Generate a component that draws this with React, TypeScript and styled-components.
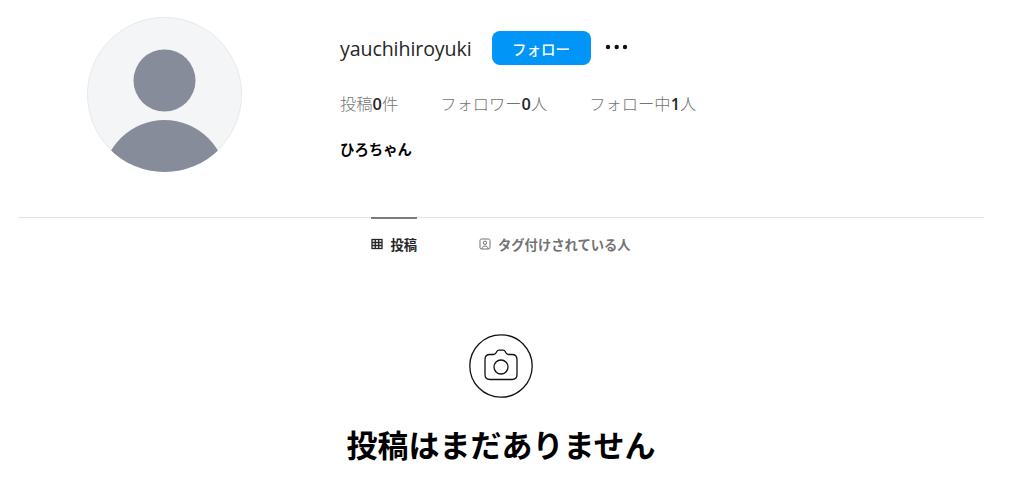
import React from "react";
import styled, { createGlobalStyle } from "styled-components";

const Global = createGlobalStyle`
  html, body { margin: 0; padding: 0; background: #fff; }
  body { font-family: "Open Sans", "Noto Sans CJK JP", sans-serif; color: #000; overflow: hidden; }
`;

const Page = styled.main`
  width: 966px;
  height: 504px;
  margin-left: 18px;
  overflow: hidden;
`;

const Header = styled.header`
  display: flex;
  height: 218px;
  padding-top: 17px;
  box-sizing: border-box;
  border-bottom: 1px solid #e3e3e3;
`;

const AvatarColumn = styled.div`
  width: 322px;
  padding-left: 69px;
  box-sizing: border-box;
  flex: none;
`;

const Avatar = styled.svg`
  display: block;
  width: 155px;
  height: 155px;
`;

const Info = styled.section`
  display: flex;
  flex-direction: column;
  padding-top: 14px;
`;

const TopRow = styled.div`
  display: flex;
  align-items: center;
  height: 34px;
`;

const Username = styled.h2`
  margin: 0 20px 0 0;
  font-size: 19.6px;
  font-weight: 400;
  color: #262626;
  letter-spacing: -0.1px;
`;

const FollowButton = styled.button`
  width: 99px;
  height: 34px;
  border: 0;
  border-radius: 8px;
  padding: 0;
  background: #0095f6;
  color: #fff;
  font-family: "Noto Sans CJK JP", sans-serif;
  font-size: 14.5px;
  font-weight: 500;
`;

const MoreDots = styled.svg`
  margin-left: 13px;
  width: 24px;
  height: 24px;
  margin-top: -2px;
`;

const Stats = styled.ul`
  display: flex;
  gap: 42px;
  margin: 27px 0 0;
  padding: 0;
  list-style: none;
  font-family: "Noto Sans CJK JP", sans-serif;
  font-size: 16.3px;
  line-height: 22px;
  font-weight: 300;
  color: #737373;
`;

const Count = styled.b`
  font-family: "Open Sans", sans-serif;
  font-weight: 600;
  color: #262626;
`;

const Bio = styled.h1`
  margin: 24px 0 0;
  font-family: "Noto Sans CJK JP", sans-serif;
  font-size: 14.4px;
  line-height: 20px;
  font-weight: 700;
`;

const Tabs = styled.nav`
  display: flex;
  justify-content: center;
  gap: 62px;
  margin-top: -1px;
`;

const Tab = styled.a<{ $active?: boolean }>`
  display: flex;
  align-items: center;
  gap: 7px;
  height: 52px;
  box-sizing: border-box;
  border-top: 2px solid ${(p) => (p.$active ? "#7d7d7d" : "transparent")};
  font-family: "Noto Sans CJK JP", sans-serif;
  font-size: 13.3px;
  font-weight: 700;
  color: ${(p) => (p.$active ? "#262626" : "#737373")};
`;

const Empty = styled.section`
  display: flex;
  flex-direction: column;
  align-items: center;
  margin-top: 65px;
`;

const CameraRing = styled.svg`
  display: block;
  width: 64px;
  height: 64px;
`;

const EmptyTitle = styled.h3`
  margin: 25px 0 0;
  font-family: "Noto Sans CJK JP", sans-serif;
  font-size: 31px;
  line-height: 42px;
  font-weight: 700;
`;

export default function App() {
  return (
    <Page>
      <Global />
      <Header>
        <AvatarColumn>
          <Avatar viewBox="0 0 155 155">
            <defs>
              <clipPath id="avatar-clip">
                <circle cx="77.5" cy="77.5" r="77.5" />
              </clipPath>
            </defs>
            <circle cx="77.5" cy="77.5" r="77" fill="#f3f5f7" stroke="#e8e9eb" strokeWidth="1" />
            <g clipPath="url(#avatar-clip)" fill="#868c9a">
              <circle cx="77.5" cy="63.5" r="31" />
              <circle cx="77.5" cy="165" r="62" />
            </g>
          </Avatar>
        </AvatarColumn>
        <Info>
          <TopRow>
            <Username>yauchihiroyuki</Username>
            <FollowButton>フォロー</FollowButton>
            <MoreDots viewBox="0 0 24 24" fill="#111">
              <circle cx="4" cy="12" r="2.2" />
              <circle cx="12.7" cy="12" r="2.2" />
              <circle cx="21" cy="12" r="2.2" />
            </MoreDots>
          </TopRow>
          <Stats>
            <li>投稿<Count>0</Count>件</li>
            <li>フォロワー<Count>0</Count>人</li>
            <li>フォロー中<Count>1</Count>人</li>
          </Stats>
          <Bio>ひろちゃん</Bio>
        </Info>
      </Header>
      <Tabs>
        <Tab $active>
          <svg width="12" height="12" viewBox="0 0 12 12" fill="none" stroke="#262626" strokeWidth="1.3">
            <rect x="1" y="1.5" width="10" height="9" />
            <path d="M1 4.5h10M1 7.5h10M4.3 1.5v9M7.7 1.5v9" />
          </svg>
          投稿
        </Tab>
        <Tab>
          <svg width="12" height="12" viewBox="0 0 12 12" fill="none" stroke="#737373" strokeWidth="1">
            <rect x="1" y="1" width="10" height="10" rx="1.5" />
            <circle cx="6" cy="4.8" r="1.7" />
            <path d="M2.8 11c.3-2 1.5-3 3.2-3s2.9 1 3.2 3" />
          </svg>
          タグ付けされている人
        </Tab>
      </Tabs>
      <Empty>
        <CameraRing viewBox="0 0 64 64" fill="none" stroke="#111" strokeWidth="1.3">
          <circle cx="32" cy="32" r="31.2" />
          <path strokeLinejoin="round" d="M21 20.5h3.5c1.2 0 2-.6 2.6-1.7l.7-1.3c.5-.9 1.2-1.3 2.2-1.3h4c1 0 1.7.4 2.2 1.3l.7 1.3c.6 1.1 1.4 1.7 2.6 1.7H43c3 0 5 2 5 5v15c0 3-2 5-5 5H21c-3 0-5-2-5-5v-15c0-3 2-5 5-5Z" />
          <circle cx="32" cy="33" r="7" />
        </CameraRing>
        <EmptyTitle>投稿はまだありません</EmptyTitle>
      </Empty>
    </Page>
  );
}
